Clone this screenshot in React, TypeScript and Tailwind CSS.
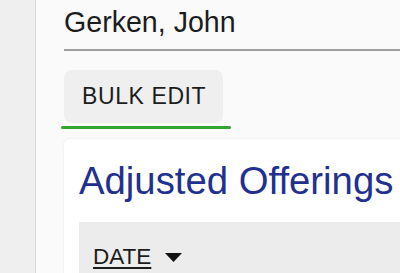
export default function App() {
  return (
    <div className="flex h-[273px] w-[400px] overflow-hidden bg-[#fafafa] font-['Liberation_Sans',Arial,sans-serif] text-[#1c1c1c]">
      {/* Left rail */}
      <div className="w-[36px] shrink-0 border-r border-[#d8d8d8] bg-[#efefef]" />

      {/* Main */}
      <div className="min-w-0 flex-1 pl-[28px]">
        <div className="border-b-2 border-[#9e9e9e] pt-[8px] pb-[13px] text-[28.6px] leading-[28px] whitespace-nowrap">
          Gerken, John
        </div>

        <div className="mt-[19px]">
          <button className="flex h-[53px] w-[159px] items-center rounded-lg bg-[#efefef] pl-[18px] text-[23px] leading-[23px] tracking-[0.6px] text-[#1c1c1c] whitespace-nowrap">
            BULK EDIT
          </button>
          <div className="mt-[3px] -ml-[3px] h-[3px] w-[170px] rounded-full bg-[#33a532]" />
        </div>

        <div className="mt-[10px] -mr-[40px] rounded-md bg-white pl-[15px] shadow-[0_0_3px_rgba(0,0,0,0.08)]">
          <h2 className="pt-[23px] text-[38.3px] leading-[38px] font-light text-[#22308f] whitespace-nowrap">
            Adjusted Offerings
          </h2>
          <div className="mt-[22px] h-[60px] bg-[#ececec] pl-[14px] pt-[24px]">
            <div className="flex items-center gap-[14px] text-[22.5px] leading-[21px]">
              <span className="underline decoration-[1.5px] underline-offset-[3px]">DATE</span>
              <svg width="17" height="9" viewBox="0 0 17 9" className="mt-[2px]">
                <path d="M0 0 H17 L8.5 9 Z" fill="#111" />
              </svg>
            </div>
          </div>
        </div>
      </div>
    </div>
  );
}
